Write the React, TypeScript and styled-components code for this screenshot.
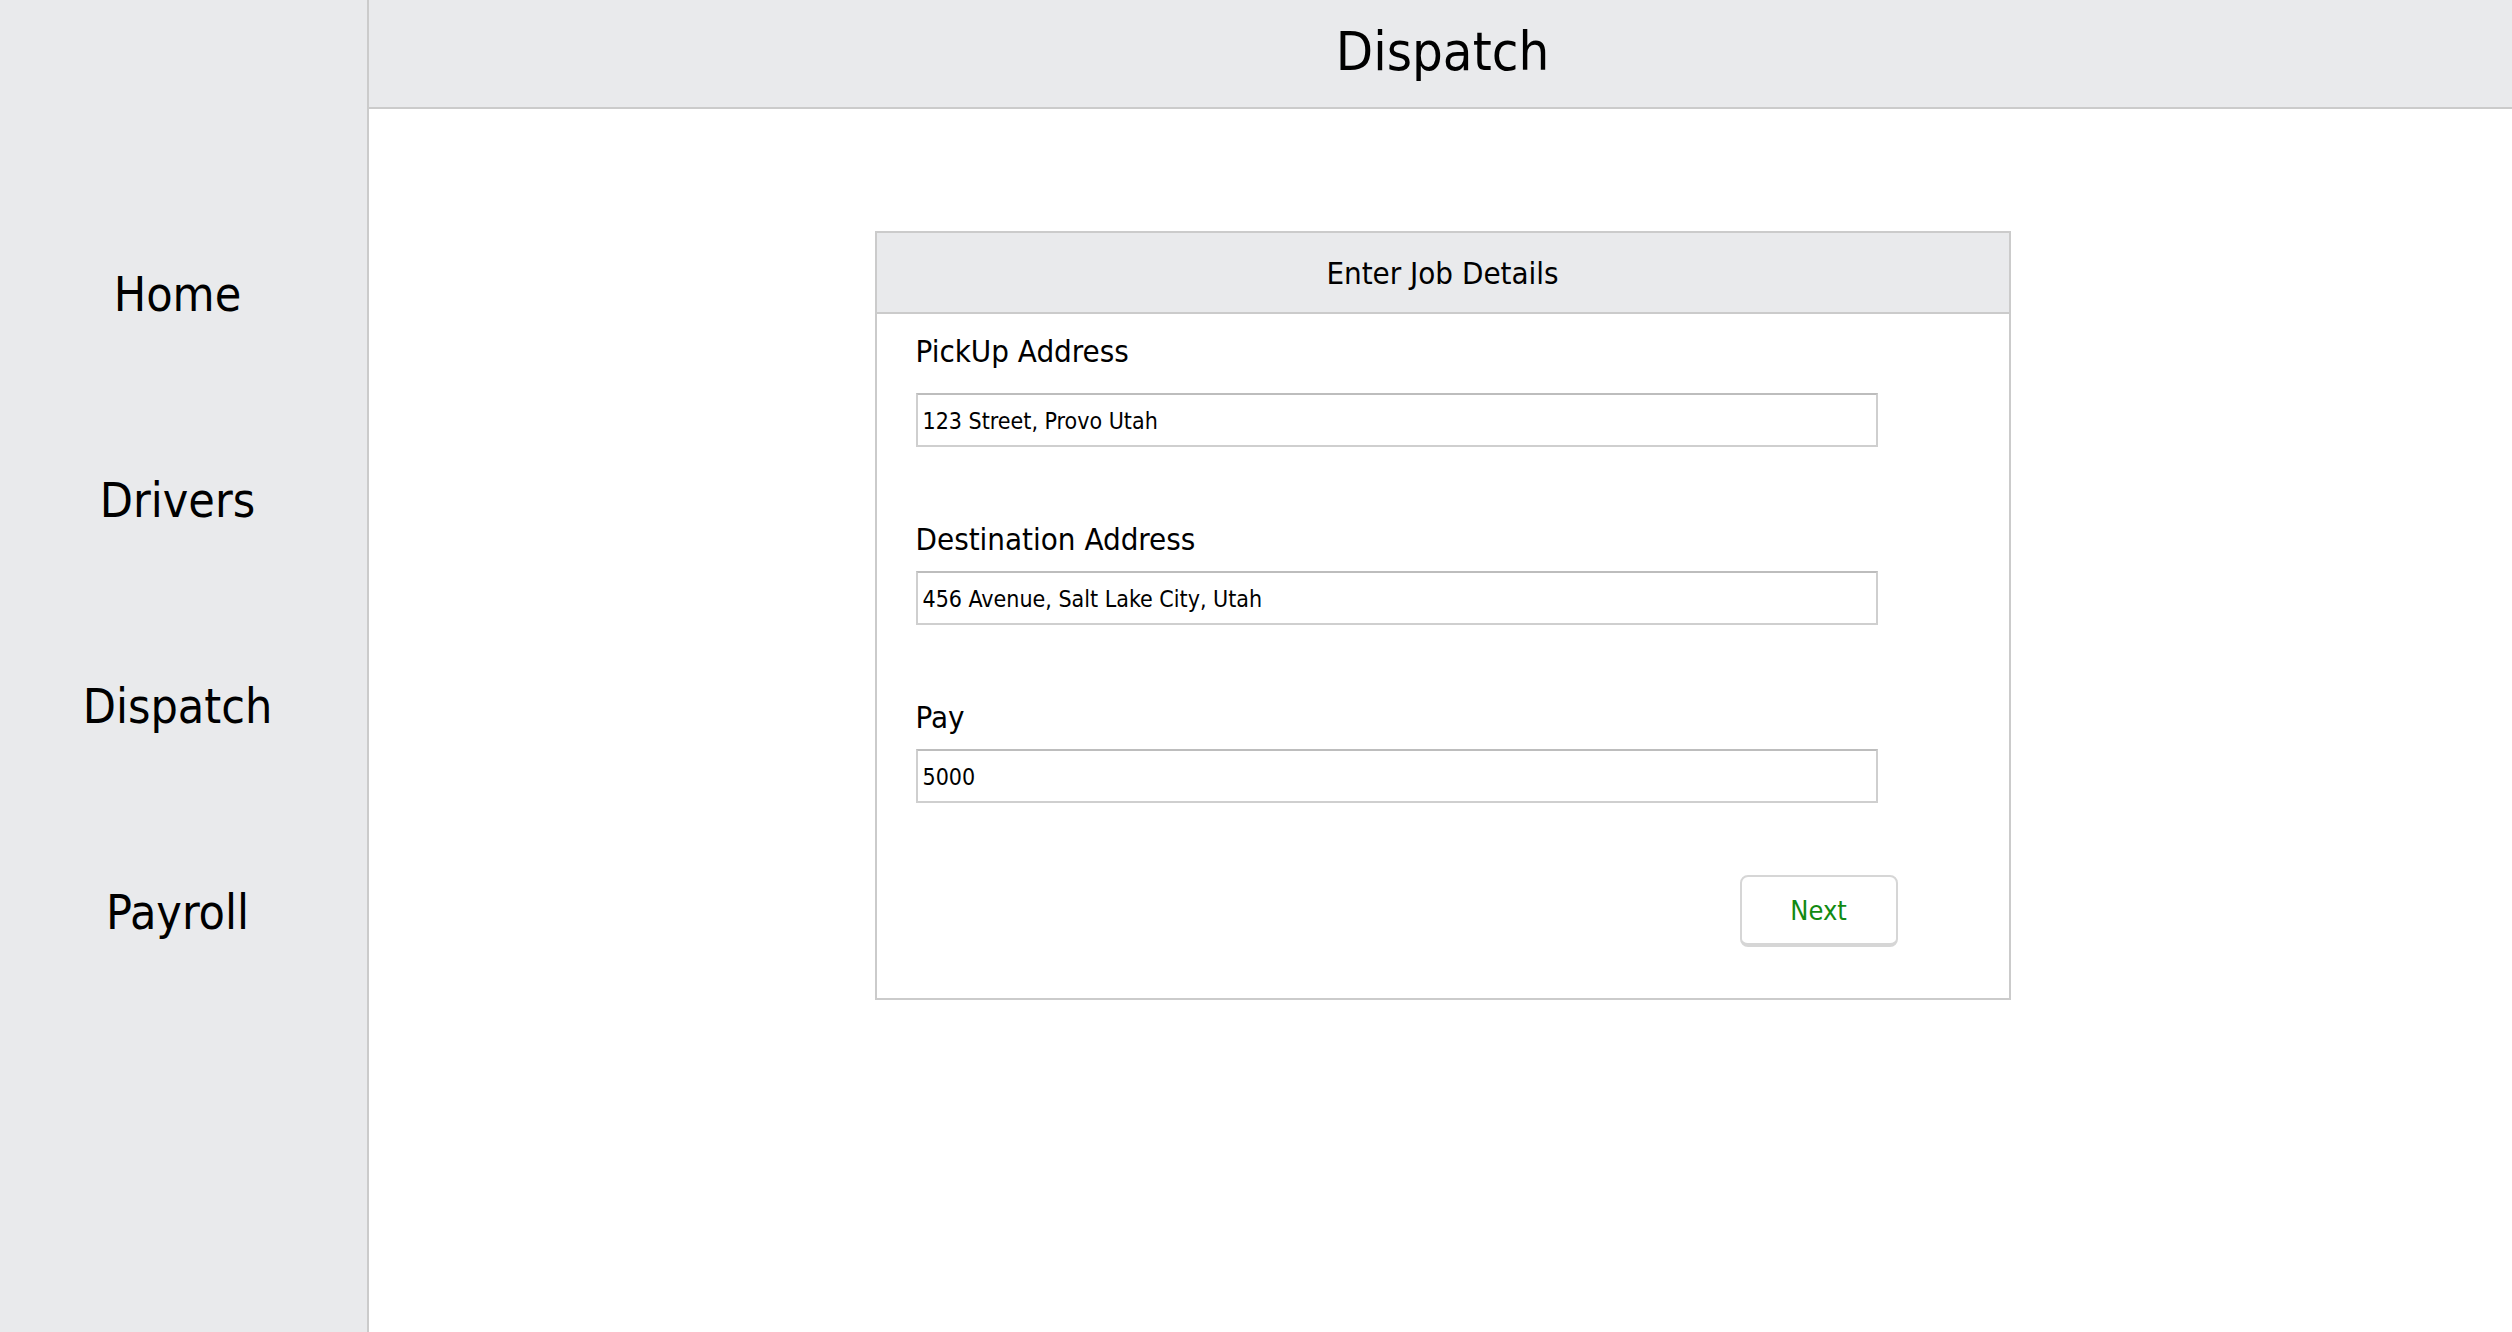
import React from 'react';
import styled, { createGlobalStyle } from 'styled-components';

const GlobalStyle = createGlobalStyle`
  html, body {
    margin: 0;
    padding: 0;
    background: #fff;
    font-family: "DejaVu Sans Condensed", "DejaVu Sans", sans-serif;
    color: #000;
  }
`;

type FieldType = {
  label: string
  value: string
};

const fields: FieldType[] = [
  { label: 'PickUp Address', value: '123 Street, Provo Utah' },
  { label: 'Destination Address', value: '456 Avenue, Salt Lake City, Utah' },
  { label: 'Pay', value: '5000' },
];

const navItems = ['Home', 'Drivers', 'Dispatch', 'Payroll'];

const App = () => {
  return (
    <Page>
      <GlobalStyle />
      <Sidebar>
        {navItems.map(item => (
          <NavItem key={item}>{item}</NavItem>
        ))}
      </Sidebar>
      <Main>
        <Header>
          <HeaderTitle>Dispatch</HeaderTitle>
        </Header>
        <Content>
          <Card>
            <CardHeader>Enter Job Details</CardHeader>
            <CardBody>
              {fields.map((field, i) => (
                <Field key={field.label}>
                  <Label first={i === 0}>{field.label}</Label>
                  <Input type="text" defaultValue={field.value} />
                </Field>
              ))}
              <ButtonRow>
                <NextButton>Next</NextButton>
              </ButtonRow>
            </CardBody>
          </Card>
        </Content>
      </Main>
    </Page>
  );
};

export default App;

const Page = styled.div`
  display: flex;
  width: 100%;
  height: 100vh;
  overflow: hidden;
`;

const Sidebar = styled.nav`
  width: 355px;
  flex-shrink: 0;
  background: #e9eaec;
  border-right: 2px solid #cbcbcb;
  display: flex;
  flex-direction: column;
  padding: 191px 12px 0 0;
`;

const NavItem = styled.div`
  height: 206px;
  display: flex;
  align-items: center;
  justify-content: center;
  font-size: 48px;
  line-height: 1;
  cursor: pointer;
`;

const Main = styled.div`
  flex: 1;
  display: flex;
  flex-direction: column;
`;

const Header = styled.header`
  height: 107px;
  background: #e9eaec;
  border-bottom: 2px solid #cbcbcb;
  display: flex;
  align-items: center;
  justify-content: center;
`;

const HeaderTitle = styled.h1`
  margin: 0 0 4px 4px;
  font-size: 54px;
  font-weight: 400;
`;

const Content = styled.div`
  padding-top: 122px;
  display: flex;
  justify-content: center;
`;

const Card = styled.div`
  width: 1136px;
  margin-left: 4px;
  border: 2px solid #cbcbcb;
  box-sizing: border-box;
`;

const CardHeader = styled.div`
  height: 79px;
  background: #e9eaec;
  border-bottom: 2px solid #cbcbcb;
  display: flex;
  align-items: center;
  justify-content: center;
  font-size: 31px;
`;

const CardBody = styled.div`
  padding: 17px 38px 51px 39px;
`;

const Field = styled.div`
  display: flex;
  flex-direction: column;
  margin-bottom: 72px;

  &:last-of-type {
    margin-bottom: 79px;
  }
`;

const Label = styled.label<{ first?: boolean }>`
  font-size: 31px;
  line-height: 40px;
  margin-bottom: ${props => (props.first ? '22px' : '12px')};
`;

const Input = styled.input`
  width: 962px;
  height: 54px;
  box-sizing: border-box;
  border: 2px solid #cfcfcf;
  border-top-color: #bdbdbd;
  padding: 2px 5px 0 5px;
  font-family: "DejaVu Sans Condensed", "DejaVu Sans", sans-serif;
  font-size: 23px;
  color: #000;
  outline: none;
`;

const ButtonRow = styled.div`
  display: flex;
  justify-content: flex-end;
  padding-right: 73px;
`;

const NextButton = styled.button`
  width: 158px;
  height: 72px;
  background: #fff;
  border: 2px solid #d6d6d6;
  border-bottom-width: 4px;
  border-radius: 8px;
  color: #118a11;
  font-family: "DejaVu Sans Condensed", "DejaVu Sans", sans-serif;
  font-size: 27px;
  cursor: pointer;
`;
